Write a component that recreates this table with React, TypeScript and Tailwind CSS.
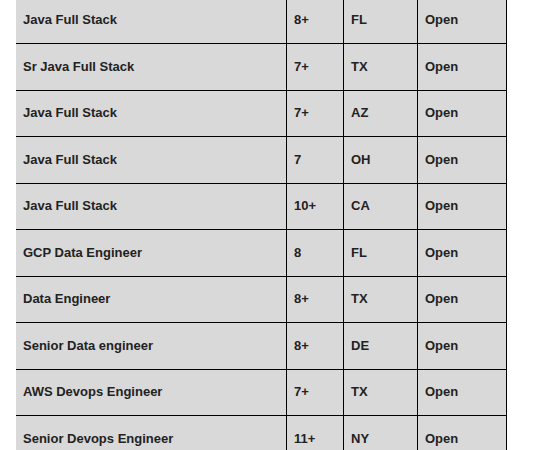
const rows: [string, string, string, string][] = [
  ['Java Full Stack', '8+', 'FL', 'Open'],
  ['Sr Java Full Stack', '7+', 'TX', 'Open'],
  ['Java Full Stack', '7+', 'AZ', 'Open'],
  ['Java Full Stack', '7', 'OH', 'Open'],
  ['Java Full Stack', '10+', 'CA', 'Open'],
  ['GCP Data Engineer', '8', 'FL', 'Open'],
  ['Data Engineer', '8+', 'TX', 'Open'],
  ['Senior Data engineer', '8+', 'DE', 'Open'],
  ['AWS Devops Engineer', '7+', 'TX', 'Open'],
  ['Senior Devops Engineer', '11+', 'NY', 'Open'],
];

export default function App() {
  return (
    <div className="h-[450px] w-[544px] overflow-hidden bg-white">
      {/* table is scrolled: first row starts above the viewport */}
      <div
        className="ml-4 mt-[-2.5px] w-[491px] text-[13px] font-bold text-[#222]"
        style={{ fontFamily: '"Liberation Sans", Arial, sans-serif' }}
      >
        {rows.map((r, i) => (
          <div key={i} className="flex h-[46.5px] border-b border-black bg-[#d9d9d9]">
            <div className="flex w-[270px] items-center pb-px pl-[7px]">{r[0]}</div>
            <div className="flex w-[57px] items-center border-l border-black pb-px pl-[7px]">{r[1]}</div>
            <div className="flex w-[74px] items-center border-l border-black pb-px pl-[7px]">{r[2]}</div>
            <div className="flex w-[90px] items-center border-x border-black pb-px pl-[7px]">{r[3]}</div>
          </div>
        ))}
      </div>
    </div>
  );
}
